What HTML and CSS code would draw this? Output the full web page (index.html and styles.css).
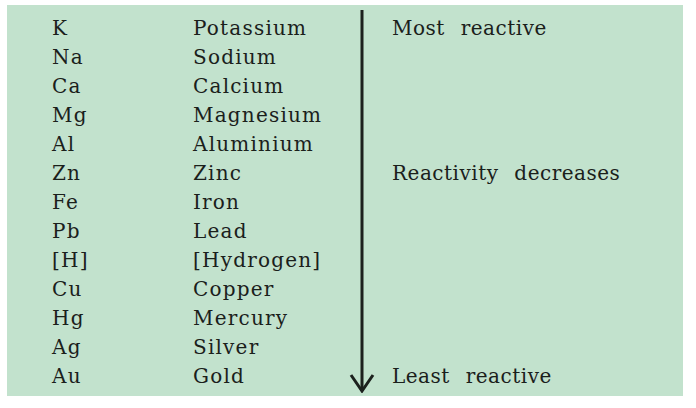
FILE: index.html
```html
<!DOCTYPE html>
<html>
<head>
<meta charset="utf-8">
<link rel="stylesheet" href="styles.css">
</head>
<body>
<div class="panel">
  <div class="series">
    <div class="sym">K</div><div class="name">Potassium</div>
    <div class="arrow">
      <svg width="26" height="383" viewBox="0 0 26 383">
        <line x1="13" y1="0" x2="13" y2="381" stroke="#1c211d" stroke-width="3"/>
        <polyline points="2,365 13,381 24,365" fill="none" stroke="#1c211d" stroke-width="3" stroke-linejoin="miter"/>
      </svg>
    </div>
    <div class="note">Most reactive</div>
    <div class="sym">Na</div><div class="name">Sodium</div><div class="note"></div>
    <div class="sym">Ca</div><div class="name">Calcium</div><div class="note"></div>
    <div class="sym">Mg</div><div class="name">Magnesium</div><div class="note"></div>
    <div class="sym">Al</div><div class="name">Aluminium</div><div class="note"></div>
    <div class="sym">Zn</div><div class="name">Zinc</div><div class="note">Reactivity decreases</div>
    <div class="sym">Fe</div><div class="name">Iron</div><div class="note"></div>
    <div class="sym">Pb</div><div class="name">Lead</div><div class="note"></div>
    <div class="sym">[H]</div><div class="name">[Hydrogen]</div><div class="note"></div>
    <div class="sym">Cu</div><div class="name">Copper</div><div class="note"></div>
    <div class="sym">Hg</div><div class="name">Mercury</div><div class="note"></div>
    <div class="sym">Ag</div><div class="name">Silver</div><div class="note"></div>
    <div class="sym">Au</div><div class="name">Gold</div><div class="note">Least reactive</div>
  </div>
</div>
</body>
</html>
```

FILE: styles.css
```css
html, body {
  margin: 0;
  padding: 0;
  background: #ffffff;
}

.panel {
  margin: 5px 0 0 7px;
  width: 676px;
  height: 391px;
  box-sizing: border-box;
  background: #c2e2cd;
  padding: 8px 0 0 45px;
  font-family: "DejaVu Serif", "Liberation Serif", serif;
  font-size: 20px;
  color: #1a201b;
}

.series {
  display: grid;
  grid-template-columns: 141px 156px 26px 1fr;
  grid-auto-rows: 29px;
}

.sym, .name, .note {
  line-height: 30px;
  white-space: nowrap;
}

.sym, .name {
  letter-spacing: 1.2px;
}

.note {
  padding-left: 17px;
  grid-column: 4;
  letter-spacing: 0.5px;
  word-spacing: 9px;
}

.arrow {
  grid-column: 3;
  grid-row: 1 / span 13;
  margin-top: -3px;
  display: flex;
}

.arrow svg {
  display: block;
}
```
